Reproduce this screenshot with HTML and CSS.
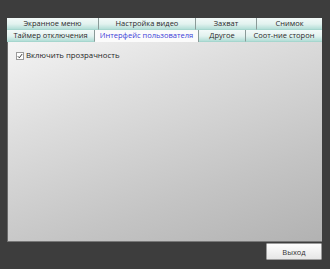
FILE: index.html
```html
<!DOCTYPE html>
<html lang="ru">
<head>
  <meta charset="UTF-8">
  <title>Настройки</title>
  <link rel="stylesheet" href="styles.css">
</head>
<body>
  <div class="window">
    <div class="tabs">
      <div class="tab-row">
        <div class="tab w92">Экранное меню</div>
        <div class="tab w97">Настройка видео</div>
        <div class="tab w61">Захват</div>
        <div class="tab grow">Снимок</div>
      </div>
      <div class="tab-row">
        <div class="tab w88">Таймер отключения</div>
        <div class="tab w104 active">Интерфейс пользователя</div>
        <div class="tab w47">Другое</div>
        <div class="tab grow">Соот-ние сторон</div>
      </div>
    </div>

    <div class="panel">
      <label class="check">
        <span class="box">
          <svg width="7" height="7" viewBox="0 0 7 7"><path d="M1 3.8 L2.7 5.6 L6 1.2" fill="none" stroke="#333" stroke-width="1.1"/></svg>
        </span>
        Включить прозрачность
      </label>
    </div>

    <div class="footer">
      <button class="exit">Выход</button>
    </div>
  </div>
</body>
</html>
```

FILE: styles.css
```css
body {
  margin: 0;
  background-color: #3d3d3d;
  font-family: "Open Sans", "Noto Sans", sans-serif;
}

.window {
  width: 330px;
  height: 269px;
  padding: 18px 8px 0 7px;
  box-sizing: border-box;
}

.tab-row {
  display: flex;
  height: 12px;
}

.tab {
  box-sizing: border-box;
  height: 12px;
  font-size: 7.5px;
  line-height: 11px;
  text-align: center;
  color: #2a2a2a;
  background: linear-gradient(#f3faf9, #e2f2ef 55%, #b3ded7);
  border-right: 1px solid #8a9a98;
  border-bottom: 1px solid #a6d6ce;
  white-space: nowrap;
  overflow: hidden;
}

.tab:last-child {
  border-right: none;
}

.tab.active {
  background: #fbfbfb;
  color: #3b3bd8;
  border-bottom: none;
}

.w92 { width: 92px; }
.w97 { width: 97px; }
.w61 { width: 61px; }
.w88 { width: 88px; }
.w104 { width: 104px; }
.w47 { width: 47px; }
.grow { flex: 1; }

.panel {
  height: 200px;
  box-sizing: border-box;
  padding: 9px 8px;
  background: linear-gradient(160deg, #f4f4f4 0%, #dedede 30%, #c4c4c4 70%, #b2b2b2 100%);
  border-left: 1px solid #6a6a6a;
  border-bottom: 1px solid #777;
}

.check {
  display: flex;
  align-items: center;
  gap: 2px;
  font-size: 7.8px;
  line-height: 9px;
  color: #262626;
}

.box {
  width: 6px;
  height: 6px;
  background: #fdfdfd;
  border: 1px solid #9a9a9a;
  display: flex;
}

.box svg {
  width: 6px;
  height: 6px;
}

.footer {
  display: flex;
  justify-content: flex-end;
  padding-top: 1px;
}

.exit {
  width: 56px;
  height: 17px;
  padding: 0;
  font-family: "Open Sans", "Noto Sans", sans-serif;
  font-size: 7.5px;
  color: #333;
  background: linear-gradient(#fdfdfd, #e6e6e6);
  border: 1px solid #9c9c9c;
  border-radius: 1px;
}
```
